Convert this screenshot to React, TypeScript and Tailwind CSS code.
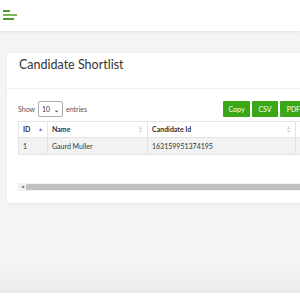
import React from 'react';

function Hamburger() {
  return (
    <div className="flex flex-col gap-[2px] pl-[3px] pt-[10px]">
      <span className="block h-[2px] w-[7px] bg-[#4f9a2c]" />
      <span className="block h-[2px] w-[14px] bg-[#7bb65a]" />
      <span className="block h-[2px] w-[11px] bg-[#4f9a2c]" />
    </div>
  );
}

function SortIcon({ active }: { active?: boolean }) {
  return (
    <span className="flex flex-col items-center leading-none text-[5px]">
      <span className={active ? 'text-[#6b6bd6]' : 'text-[#d4d4d4]'}>▲</span>
      {!active && <span className="text-[#d4d4d4] -mt-[1px]">▼</span>}
    </span>
  );
}

export default function App() {
  const btn = 'h-[16px] bg-[#3aa816] text-white text-[7px] flex items-center justify-center rounded-[1px]';
  const cell = 'border border-[#e4e4e4] px-[4px] overflow-hidden whitespace-nowrap';
  return (
    <div
      className="w-[300px] h-[300px] overflow-hidden bg-[#f4f4f4] flex flex-col"
      style={{ fontFamily: 'Lato, "Noto Sans", sans-serif' }}
    >
      <div className="h-[31px] bg-white shadow-[0_1px_3px_rgba(0,0,0,0.08)] shrink-0 relative z-10">
        <Hamburger />
      </div>

      <div className="flex-1 pt-[22px] pl-[7px]">
        <div className="w-[320px] bg-white shadow-[0_1px_2px_rgba(0,0,0,0.08)] pb-[12px]">
          <div className="h-[36px] px-[12px] pt-[4px] border-b border-[#f0f0f0]">
            <h2 className="text-[12.5px] leading-[16px] text-[#333]">Candidate Shortlist</h2>
          </div>

          <div className="pl-[11px] pt-[12px]">
            <div className="flex items-center justify-between w-[289px]">
              <div className="flex items-center gap-[3px] text-[7px] text-[#555]">
                <span>Show</span>
                <span className="h-[16px] w-[25px] border border-[#aaa] rounded-[2px] flex items-center justify-between px-[3px] text-[7px] text-[#333]">
                  10 <span className="text-[6px] font-bold">⌄</span>
                </span>
                <span>entries</span>
              </div>
              <div className="flex gap-[2px]">
                <span className={btn + ' w-[27px]'}>Copy</span>
                <span className={btn + ' w-[26px]'}>CSV</span>
                <span className={btn + ' w-[27px]'}>PDF</span>
              </div>
            </div>

            <table className="mt-[4px] border-collapse table-fixed text-[7px] text-[#333] w-[330px]">
              <colgroup>
                <col className="w-[29px]" />
                <col className="w-[100px]" />
                <col className="w-[148px]" />
                <col />
              </colgroup>
              <thead>
                <tr className="h-[16px]">
                  <th className={cell + ' font-bold text-left'}>
                    <div className="flex items-center justify-between">ID <SortIcon active /></div>
                  </th>
                  <th className={cell + ' font-bold text-left'}>
                    <div className="flex items-center justify-between">Name <SortIcon /></div>
                  </th>
                  <th className={cell + ' font-bold text-left'}>
                    <div className="flex items-center justify-between">Candidate Id <SortIcon /></div>
                  </th>
                  <th className={cell + ' font-bold text-left'}>Job</th>
                </tr>
              </thead>
              <tbody>
                <tr className="h-[17px] bg-[#f2f2f2]">
                  <td className={cell}>1</td>
                  <td className={cell}>Gaurd Muller</td>
                  <td className={cell}>163159951374195</td>
                  <td className={cell}>SE</td>
                </tr>
              </tbody>
            </table>

            <div className="mt-[28px] h-[8px] flex bg-[#f1f1f1]">
              <span className="w-[8px] flex items-center justify-center text-[4px] text-[#777]">◀</span>
              <span className="flex-1 bg-[#c1c1c1] rounded-[1px] my-[1px]" />
            </div>
          </div>
        </div>
      </div>

      <div className="h-[30px] bg-gradient-to-b from-[#f4f4f4] to-[#ececec] shrink-0" />
      <div className="h-[7px] bg-white shrink-0" />
    </div>
  );
}
